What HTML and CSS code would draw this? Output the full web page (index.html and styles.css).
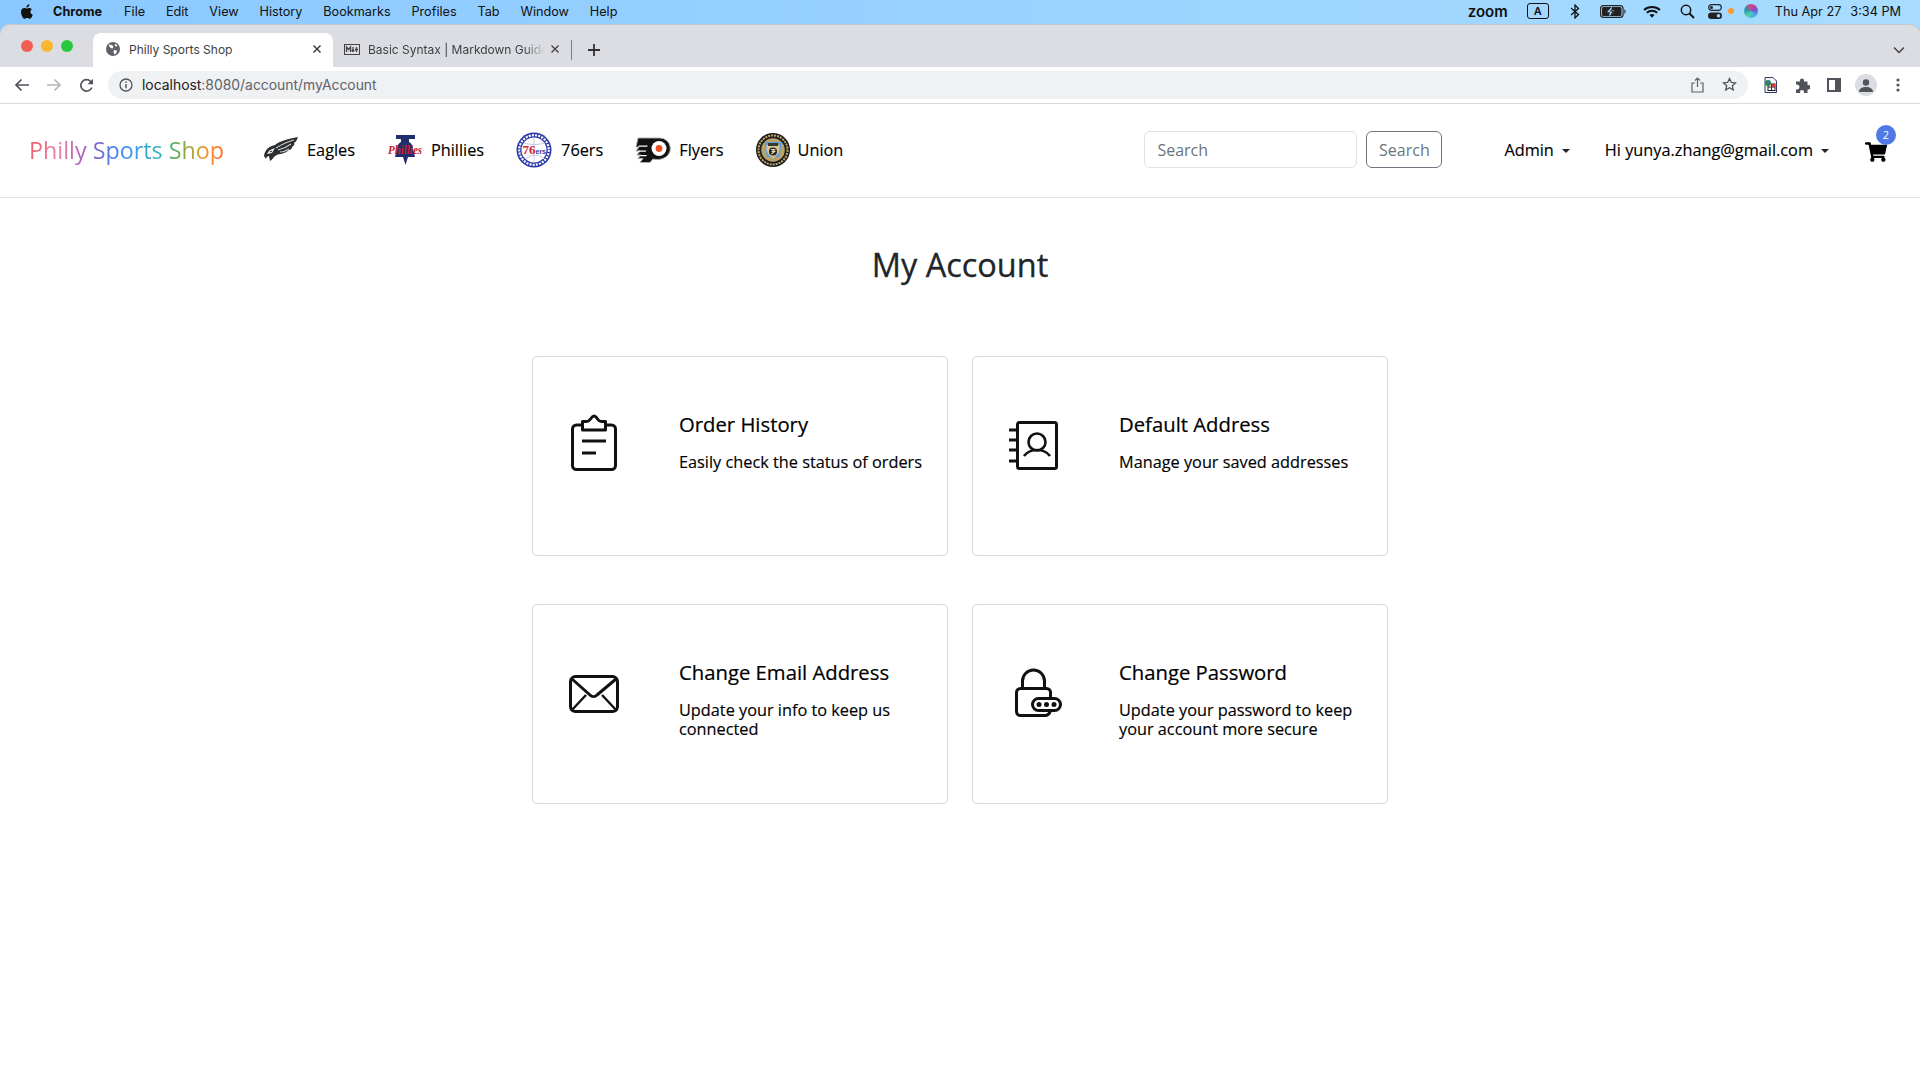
FILE: index.html
```html
<!DOCTYPE html>
<html lang="en">
<head>
    <meta charset="UTF-8">
    <meta name="viewport" content="width=device-width, initial-scale=1.0">
    <title>Philly Sports Shop</title>
    <link rel="stylesheet" href="styles.css">
</head>
<body>
    <div class="desktop">
        <div class="menubar">
            <svg class="apple" width="14" height="17" viewBox="0 0 14 17"><path fill="#111" d="M11.4 9c0-1.800 1.400-2.600 1.500-2.700-.8-1.200-2.100-1.400-2.500-1.400-1.100-.1-2.100.6-2.600.6-.6 0-1.400-.6-2.300-.6C4.300 4.900 3.200 5.600 2.600 6.600 1.300 8.800 2.300 12.100 3.500 13.900c.6.900 1.300 1.900 2.300 1.800.9 0 1.300-.6 2.400-.6s1.400.6 2.400.6 1.600-.9 2.200-1.800c.7-1 1-2 1-2.100-.1 0-2.400-.9-2.400-2.800zM9.600 3.600c.5-.6.800-1.500.7-2.300-.7 0-1.600.5-2.100 1.100-.5.5-.9 1.400-.8 2.200.8.100 1.700-.4 2.200-1z"/></svg>
            <span class="menu-app">Chrome</span>
            <span class="menu-item">File</span>
            <span class="menu-item">Edit</span>
            <span class="menu-item">View</span>
            <span class="menu-item">History</span>
            <span class="menu-item">Bookmarks</span>
            <span class="menu-item">Profiles</span>
            <span class="menu-item">Tab</span>
            <span class="menu-item">Window</span>
            <span class="menu-item">Help</span>

            <div class="tray">
                <span class="tray-zoom">zoom</span>
                <span class="tray-a">A</span>
                <svg class="tray-bt" width="10" height="15" viewBox="0 0 10 15"><path fill="none" stroke="#111" stroke-width="1.300" d="M1 4l7.500 6.500L5 14V1l3.500 3.500L1 11"/></svg>
                <svg class="tray-batt" width="26" height="13" viewBox="0 0 26 13"><rect x=".6" y=".6" width="22.500" height="11.800" rx="3" fill="none" stroke="#222" stroke-width="1.100"/><rect x="2" y="2" width="19.500" height="9" rx="1.500" fill="#222"/><rect x="24.200" y="4.500" width="1.300" height="4" rx=".6" fill="#444"/><path fill="#a5daff" d="M12 1.500L7 7.200h3l-1 4.300L14.500 5.500h-3z"/><path fill="#222" d="M12.500 3.200L9.500 6.500h2.500l-.8 3L14 6h-2.500z"/></svg>
                <svg class="tray-wifi" width="18" height="13" viewBox="0 0 18 13"><path fill="none" stroke="#111" stroke-width="2" d="M1 5c4.500-4 11.500-4 16 0M3.800 7.800c3-2.600 7.400-2.600 10.400 0"/><path fill="#111" d="M6.500 10c1.500-1.200 3.500-1.200 5 0L9 12.800z"/></svg>
                <svg class="tray-search" width="15" height="15" viewBox="0 0 15 15"><circle cx="6" cy="6" r="4.700" fill="none" stroke="#111" stroke-width="1.500"/><path stroke="#111" stroke-width="2" d="M9.500 9.500l4.500 4.500"/></svg>
                <svg class="tray-cc" width="14" height="15" viewBox="0 0 14 15"><rect x=".7" y=".7" width="12.600" height="5.600" rx="2.800" fill="none" stroke="#222" stroke-width="1.200"/><circle cx="3.500" cy="3.500" r="1.500" fill="#222"/><rect y="8.500" width="14" height="6.500" rx="3.200" fill="#222"/><circle cx="10.500" cy="11.700" r="1.800" fill="#9ed5ff"/></svg>
                <span class="tray-dot"></span>
                <span class="tray-siri"></span>
                <span class="tray-date">Thu Apr 27</span>
                <span class="tray-time">3:34 PM</span>
            </div>
        </div>

        <div class="tabstrip">
            <div class="lights">
                <span class="light light-red"></span>
                <span class="light light-yellow"></span>
                <span class="light light-green"></span>
            </div>
            <div class="tab tab-active">
                <svg width="14" height="14" viewBox="0 0 14 14"><circle cx="7" cy="7" r="7" fill="#5f6368"/><path fill="#fff" d="M3 2.500l3 .5 1.500 1.500-1 2-2-.5-1.500-2zM8 8l3 .5-.5 2.500-2 1.500-1-2.500zM9 1.800l2.300 1.500-.8 1.500-1.700-1z"/></svg>
                <span class="tab-title">Philly Sports Shop</span>
                <svg class="tab-close" width="10" height="10" viewBox="0 0 10 10"><path stroke="#333" stroke-width="1.400" d="M1.500 1.500l7 7M8.500 1.500l-7 7"/></svg>
            </div>
            <div class="tab tab-other">
                <svg width="16" height="11" viewBox="0 0 16 11"><rect x=".5" y=".5" width="15" height="10" fill="none" stroke="#444"/><path fill="none" stroke="#444" stroke-width="1.300" d="M2.500 8V3l2 2.500L6.500 3v5M9 3v4.500M9 7.500L7.800 6M9 7.500L10.200 6M11 5.500h3M12.500 3v5"/></svg>
                <span class="tab-title tab-fade">Basic Syntax | Markdown Guide</span>
                <svg class="tab-close" width="10" height="10" viewBox="0 0 10 10"><path stroke="#444" stroke-width="1.400" d="M1.500 1.500l7 7M8.500 1.500l-7 7"/></svg>
            </div>
            <span class="tab-sep"></span>
            <svg class="tab-new" width="14" height="14" viewBox="0 0 14 14"><path stroke="#333" stroke-width="1.800" d="M7 1v12M1 7h12"/></svg>
            <svg class="tab-list" width="14" height="8" viewBox="0 0 14 8"><path fill="none" stroke="#444" stroke-width="1.500" d="M2 1.500l5 5 5-5"/></svg>
        </div>
    </div>

    <div class="toolbar">
        <span class="tool"><svg width="16" height="14" viewBox="0 0 16 14"><path fill="none" stroke="#50545a" stroke-width="1.700" d="M15 7H2M7.500 1.500L2 7l5.500 5.500"/></svg></span>
        <span class="tool"><svg width="16" height="14" viewBox="0 0 16 14"><path fill="none" stroke="#b4b6ba" stroke-width="1.700" d="M1 7h13M8.500 1.500L14 7l-5.500 5.500"/></svg></span>
        <span class="tool"><svg width="15" height="15" viewBox="0 0 15 15"><path fill="none" stroke="#50545a" stroke-width="1.700" d="M12.800 9.500A5.700 5.700 0 1 1 11.500 3.300L13 4.800"/><path fill="#50545a" d="M14 .8v5.400H8.600z"/></svg></span>
        <div class="omnibox">
            <svg width="14" height="14" viewBox="0 0 14 14"><circle cx="7" cy="7" r="6" fill="none" stroke="#50545a" stroke-width="1.300"/><path stroke="#50545a" stroke-width="1.400" d="M7 6v4.200M7 3.600v1.500"/></svg>
            <span class="url"><b>localhost</b>:8080/account/myAccount</span>
            <svg class="omni-share" width="13" height="16" viewBox="0 0 13 16"><path fill="none" stroke="#5f6368" stroke-width="1.200" d="M4 6H1v9h11V6H9M6.500 10V1M4 3.500L6.500 1 9 3.500"/></svg>
            <svg class="omni-star" width="15" height="15" viewBox="0 0 15 15"><path fill="none" stroke="#50545a" stroke-width="1.300" d="M7.500 1.500l1.800 4 4.300.4-3.300 2.900 1 4.200-3.800-2.200-3.800 2.200 1-4.200L1.400 5.900l4.300-.4z"/></svg>
        </div>
        <span class="tool"><svg width="14" height="16" viewBox="0 0 14 16"><path fill="#f4f6fa" stroke="#333a66" d="M2 .5h8l3.500 3.500v11.500H2z"/><rect x="5" y="7" width="7" height="6.500" fill="#fff" stroke="#222"/><path stroke="#222" d="M8.500 7v6.500M5 10h7"/><rect x="8.500" y="7" width="3.500" height="3" fill="#d33"/><circle cx="5" cy="6" r="3" fill="#2a8a3c"/><circle cx="5" cy="5" r="1.500" fill="#2f6fd0"/></svg></span>
        <span class="tool"><svg width="15" height="15" viewBox="0 0 15 15"><path fill="#50545a" d="M5 2.500a2 2 0 0 1 4 0V3.500h3.500V7h1a2.200 2.200 0 0 1 0 4.400h-1V15H9v-1a2 2 0 0 0-4 0v1H1v-3.500h1a2.500 2.500 0 0 0 0-5H1V3.500h4z"/></svg></span>
        <span class="tool"><svg width="14" height="14" viewBox="0 0 14 14"><rect x="1" y="1" width="12" height="12" fill="#fff" stroke="#50545a" stroke-width="2"/><rect x="8" y="1" width="5" height="12" fill="#50545a"/></svg></span>
        <span class="tool"><span class="profile"><svg width="14" height="13" viewBox="0 0 14 13"><circle cx="7" cy="3.500" r="3.200" fill="#50545a"/><path fill="#50545a" d="M0 13c0-3.500 3-5 7-5s7 1.500 7 5z"/></svg></span></span>
        <span class="tool"><svg width="4" height="14" viewBox="0 0 4 14"><circle cx="2" cy="2" r="1.600" fill="#50545a"/><circle cx="2" cy="7" r="1.600" fill="#50545a"/><circle cx="2" cy="12" r="1.600" fill="#50545a"/></svg></span>
    </div>

    <nav class="navbar">
        <a class="brand">Philly Sports Shop</a>
        <div class="teams">
            <a class="team">
                <svg class="logo-eagles" width="35" height="25" viewBox="0 0 35 25">
                    <path fill="#2a2e31" d="M0 19C1 12 6 9 11 8c5-4 13-6 23-8-1 3-2 5-4 6 1 1 0 3-2 4 0 1-1 3-3 3-2 2-5 3-8 4-3 0-5 1-7 3-1 1-2 3-4 4l-1-5c-1 0-3 1-3 3z"/>
                    <path fill="none" stroke="#c9cdd0" stroke-width="1.200" d="M12 11c5-3 10-6 18-8M14 13c5-1 9-3 13-6M16 15c3 0 6-1 9-3"/>
                    <path fill="#e8eaeb" d="M3 17c1-3 4-5 8-6l-3 5z"/>
                    <circle cx="7" cy="14.500" r=".8" fill="#111"/>
                </svg>
                Eagles
            </a>
            <a class="team">
                <svg width="36" height="32" viewBox="0 0 36 32">
                    <path fill="#1f2f6e" d="M9 1h19v4h-6v3c2 1 4 3 4 7l2 8H8l2-8c0-4 2-6 4-7V5H9zM16 23h5l-2.500 8z"/>
                    <text class="logo-script" x="18" y="20" text-anchor="middle" textLength="34" lengthAdjust="spacingAndGlyphs">Phillies</text>
                </svg>
                Phillies
            </a>
            <a class="team">
                <svg width="37" height="36" viewBox="0 0 37 36">
                    <circle cx="18" cy="18" r="17.500" fill="#2a3aa8"/>
                    <circle cx="18" cy="18" r="14.800" fill="none" stroke="#fff" stroke-width="2.200" stroke-dasharray="2 1.200"/>
                    <circle cx="18" cy="18" r="12.500" fill="#fff"/>
                    <path fill="none" stroke="#c5cbe6" stroke-width="1" d="M8 11c6 2 14 2 21 0M18 6v24M10 27c5-5 14-5 18 0"/>
                    <text class="logo-76" x="6.500" y="22">76</text>
                    <text class="logo-ers" x="19.500" y="22">ers</text>
                </svg>
                76ers
            </a>
            <a class="team">
                <svg width="36" height="26" viewBox="0 0 36 26">
                    <path fill="#111" stroke="#a9abad" stroke-width="1" d="M3 1h22a10.500 10.500 0 0 1 3 20.500c-4 1.500-8 1-10 .5l-3 3.500H5l3-4H3l3-3.500H2l3-4H1l3-4H1z"/>
                    <circle cx="24" cy="11.500" r="7.500" fill="#fff"/>
                    <circle cx="24" cy="11.500" r="3.400" fill="#f04e23"/>
                    <path fill="#fff" d="M4 8.500h9l-1 1.200H3zM3.500 13.500h8l-1 1.200h-8zM6 18h6l-1 1.200H5z"/>
                </svg>
                Flyers
            </a>
            <a class="team">
                <svg width="34" height="34" viewBox="0 0 34 34">
                    <circle cx="17" cy="17" r="17" fill="#1b1c1a"/>
                    <circle cx="17" cy="17" r="14.500" fill="none" stroke="#c2a76c" stroke-width="2" stroke-dasharray="2 1"/>
                    <circle cx="17" cy="17" r="11.800" fill="#b9a26b"/>
                    <path fill="#5aa0d8" d="M9 9h16v5l-2 10H11L9 14z"/>
                    <path fill="#d8c795" d="M10.500 12h13v3c0 5-3 8-6.500 10-3.500-2-6.500-5-6.500-10z"/>
                    <circle cx="17" cy="18.500" r="4" fill="#23221e"/>
                    <path fill="none" stroke="#e4d7ae" stroke-width="1.200" d="M15 16.500h3.500l-2 2h2l-3 2.500"/>
                    <rect x="12" y="10" width="10" height="3" fill="#3a372c"/>
                </svg>
                Union
            </a>
        </div>

        <form class="search">
            <input class="search-input" type="text" placeholder="Search">
            <button class="search-btn" type="button">Search</button>
        </form>

        <a class="dropdown dropdown-admin">Admin</a>
        <a class="dropdown dropdown-user">Hi yunya.zhang@gmail.com</a>

        <a class="cart">
            <svg width="22" height="20" viewBox="0 0 576 512"><path fill="#000" d="M528.120 301.319l47.273-208C578.806 78.301 567.391 64 551.990 64H159.208l-9.166-44.810C147.758 8.021 137.930 0 126.529 0H24C10.745 0 0 10.745 0 24v16c0 13.255 10.745 24 24 24h69.883l70.248 343.435C147.325 417.100 136 435.222 136 456c0 30.928 25.072 56 56 56s56-25.072 56-56c0-15.674-6.447-29.835-16.824-40h209.647C430.447 426.165 424 440.326 424 456c0 30.928 25.072 56 56 56s56-25.072 56-56c0-22.172-12.888-41.332-31.579-50.405l5.517-24.276c3.413-15.018-8.002-29.319-23.403-29.319H218.117l-6.545-32h293.145c11.206 0 20.920-7.754 23.403-18.681z"/></svg>
            <span class="cart-badge">2</span>
        </a>
    </nav>

    <main class="account">
        <h1>My Account</h1>
        <div class="cards">
            <a class="card">
                <div class="card-icon">
                    <svg class="icon-order" width="52" height="62" viewBox="0 0 52 62" fill="none" stroke="#111" stroke-width="3" stroke-linejoin="round">
                        <path d="M14 13H8.500a4 4 0 0 0-4 4v36.500a4 4 0 0 0 4 4h35a4 4 0 0 0 4-4V17a4 4 0 0 0-4-4H38"/>
                        <path d="M14.500 18h23V9.500h-4c-2 0-3-1-4-2.500s-2-3-3.500-3-2.500 1.500-3.500 3-2 2.500-4 2.500h-4z"/>
                        <path d="M14 29h24M14 41h14"/>
                    </svg>
                </div>
                <div class="card-text">
                    <h2>Order History</h2>
                    <p>Easily check the status of orders</p>
                </div>
            </a>
            <a class="card">
                <div class="card-icon">
                    <svg class="icon-address" width="60" height="56" viewBox="-2 0 60 56" fill="none" stroke="#111" stroke-width="3" stroke-linejoin="round">
                        <rect x="11.500" y="4.500" width="39" height="46" rx="2"/>
                        <path d="M3 12h8M3 22h8M3 32h8M3 43h8"/>
                        <circle cx="31" cy="24" r="8.500" stroke-width="2.600"/>
                        <path stroke-width="2.600" d="M18 38c3-4 7-6 13-6s10 2 13 6"/>
                    </svg>
                </div>
                <div class="card-text">
                    <h2>Default Address</h2>
                    <p>Manage your saved addresses</p>
                </div>
            </a>
            <a class="card">
                <div class="card-icon">
                    <svg class="icon-email" width="56" height="44" viewBox="0 0 56 44" fill="none" stroke="#111" stroke-width="3" stroke-linejoin="round">
                        <rect x="4.500" y="4.500" width="47" height="35" rx="5"/>
                        <path d="M6 7l18 16c2 2 5 2 7 0L50 7"/>
                        <path stroke-width="2.400" d="M5 39l15-16M51 39L36 23"/>
                    </svg>
                </div>
                <div class="card-text">
                    <h2>Change Email Address</h2>
                    <p>Update your info to keep us connected</p>
                </div>
            </a>
            <a class="card">
                <div class="card-icon">
                    <svg class="icon-password" width="64" height="54" viewBox="-10 0 64 54" fill="none" stroke="#111" stroke-width="3" stroke-linejoin="round">
                        <path d="M10.500 22v-7a11 11 0 0 1 22 0v7"/>
                        <path d="M38.500 31v-4.500a4 4 0 0 0-4-4h-26a4 4 0 0 0-4 4v19a4 4 0 0 0 4 4H33c2.500 0 4.500-1.500 5.500-5"/>
                        <rect x="20.500" y="32.500" width="28" height="12" rx="6"/>
                        <g fill="#111" stroke="none"><circle cx="27" cy="38.500" r="2.500"/><circle cx="34.500" cy="38.500" r="2.500"/><circle cx="42" cy="38.500" r="2.500"/></g>
                    </svg>
                </div>
                <div class="card-text">
                    <h2>Change Password</h2>
                    <p>Update your password to keep your account more secure</p>
                </div>
            </a>
        </div>
    </main>
</body>
</html>
```

FILE: styles.css
```css
* {
    box-sizing: border-box;
}

body {
    margin: 0;
    background: white;
    color: #000;
    font-family: "Open Sans", sans-serif;
    font-size: 16px;
    height: 1080px;
    overflow: hidden;
}

/* mac menu bar and chrome window top */
.desktop {
    background: linear-gradient(to right, #8ac8ff, #a8dcff);
    font-family: Inter, "Liberation Sans", sans-serif;
}

.menubar {
    height: 24px;
    display: flex;
    align-items: center;
    padding-left: 19px;
    padding-bottom: 2px;
    font-size: 12.700px;
    color: #111;
}

.apple {
    margin-right: 20px;
}

.menu-app {
    font-weight: 700;
    margin-right: 22px;
}

.menu-item {
    margin-right: 20.800px;
}

.tray {
    margin-left: auto;
    padding-right: 19px;
    display: flex;
    align-items: center;
}

.tray-zoom {
    font-weight: 600;
    font-size: 15px;
    margin-right: 19px;
}

.tray-a {
    width: 22px;
    height: 16px;
    border: 1.3px solid #111;
    border-radius: 3px;
    font-size: 11px;
    font-weight: 600;
    line-height: 14px;
    text-align: center;
    margin-right: 21px;
}

.tray-bt {
    margin-right: 20px;
}

.tray-batt {
    margin-right: 17px;
}

.tray-wifi {
    margin-right: 19px;
}

.tray-search {
    margin-right: 13px;
}

.tray-cc {
    margin-right: 6px;
}

.tray-dot {
    width: 6px;
    height: 6px;
    border-radius: 50%;
    background: #ff9a2e;
    margin-right: 10px;
}

.tray-siri {
    width: 14px;
    height: 14px;
    border-radius: 50%;
    background: conic-gradient(#e0407e, #7a4fd0, #3fb4e8, #4fd0a0, #2a8fb0, #e0407e);
    margin-right: 17px;
}

.tray-date {
    margin-right: 9px;
}

.tabstrip {
    height: 43px;
    background: #dcdde2;
    border-radius: 10px 10px 0 0;
    box-shadow: inset 0 1px 0 #c4c6cc;
    display: flex;
    align-items: flex-end;
    padding-right: 14px;
    font-size: 12px;
    color: #3c4043;
}

.lights {
    width: 93px;
    height: 43px;
    padding: 16px 0 0 21px;
    display: flex;
    gap: 8px;
}

.light {
    width: 12px;
    height: 12px;
    border-radius: 50%;
}

.light-red {
    background: #f25d55;
}

.light-yellow {
    background: #fbb62f;
}

.light-green {
    background: #28c840;
}

.tab {
    height: 34px;
    display: flex;
    align-items: center;
    padding-bottom: 2px;
}

.tab-active {
    width: 240px;
    background: white;
    border-radius: 8px 8px 0 0;
    padding-left: 13px;
    padding-right: 11px;
}

.tab-active .tab-title {
    margin-left: 9px;
}

.tab-close {
    margin-left: auto;
}

.tab-other {
    width: 237px;
    margin-left: 1px;
    padding-left: 10px;
    padding-right: 11px;
}

.tab-other .tab-title {
    margin-left: 8px;
}

.tab-fade {
    width: 177px;
    white-space: nowrap;
    overflow: hidden;
    -webkit-mask-image: linear-gradient(to right, black 88%, transparent);
    mask-image: linear-gradient(to right, black 88%, transparent);
}

.tab-sep {
    width: 1px;
    height: 20px;
    background: #7d7f84;
    margin: 0 0 7px 0;
}

.tab-new {
    margin: 0 0 10px 15px;
}

.tab-list {
    margin: 0 0 13px auto;
}

.toolbar {
    height: 37px;
    background: white;
    border-bottom: 1px solid #d9dadd;
    display: flex;
    align-items: center;
    padding: 0 6px;
    font-family: Inter, "Liberation Sans", sans-serif;
}

.tool {
    width: 32px;
    display: flex;
    justify-content: center;
    align-items: center;
}

.omnibox {
    flex: 1;
    height: 28px;
    margin: 0 6px;
    background: #f0f1f3;
    border-radius: 14px;
    display: flex;
    align-items: center;
    padding-left: 11px;
    padding-right: 11px;
    padding-bottom: 1px;
    font-size: 13.900px;
    color: #5f6368;
}

.url {
    margin-left: 9px;
}

.url b {
    font-weight: 400;
    color: #202124;
}

.omni-share {
    margin-left: auto;
    margin-right: 18px;
}

.omni-star {
    margin-right: 0;
}

.profile {
    width: 22px;
    height: 22px;
    border-radius: 50%;
    background: #dcdde2;
    display: flex;
    align-items: center;
    justify-content: center;
}

/* shop navbar */
.navbar {
    height: 94px;
    border-bottom: 1px solid #dee2e6;
    display: flex;
    align-items: center;
    padding: 0 33px 2px 29px;
    font-size: 16.300px;
    -webkit-text-stroke: 0.15px #000;
}

.brand {
    font-size: 23.300px;
    margin-right: 40px;
    background: linear-gradient(to right, #f2606a, #e97fa8 16%, #9a5cc0 30%, #4c7fe6 42%, #3b9aee 54%, #2fb6b0 68%, #6aa84f 76%, #c4a72a 86%, #ff8a30 93%, #ff6a2b);
    -webkit-background-clip: text;
    background-clip: text;
    color: transparent;
    -webkit-text-stroke: 0;
}

.teams {
    display: flex;
    align-items: center;
    gap: 32px;
}

.team {
    display: flex;
    align-items: center;
    gap: 8px;
}

.team svg {
    overflow: visible;
}

.team svg text {
    -webkit-text-stroke: 0;
}

.logo-script {
    font-family: "Liberation Serif", serif;
    font-style: italic;
    font-weight: 700;
    font-size: 12px;
    fill: #c8202f;
}

.logo-76 {
    font-family: "Liberation Serif", serif;
    font-weight: 700;
    font-size: 13px;
    fill: #d3202f;
}

.logo-ers {
    font-family: "Liberation Sans", sans-serif;
    font-weight: 700;
    font-size: 7px;
    fill: #2a3aa8;
}

.search {
    margin-left: auto;
    display: flex;
    gap: 9px;
    -webkit-text-stroke: 0;
}

.search-input {
    width: 213px;
    height: 37px;
    padding: 6px 12px;
    border: 1px solid #dee2e6;
    border-radius: 6px;
    font-family: inherit;
    font-size: 16px;
    outline: none;
}

.search-input::placeholder {
    color: #6c757d;
}

.search-btn {
    width: 76px;
    height: 37px;
    padding: 0;
    background: white;
    border: 1px solid #6c757d;
    border-radius: 6px;
    font-family: inherit;
    font-size: 16px;
    color: #6c757d;
}

.dropdown::after {
    content: "";
    display: inline-block;
    margin-left: 8px;
    vertical-align: 3px;
    border-top: 4.800px solid #212529;
    border-left: 4.800px solid transparent;
    border-right: 4.800px solid transparent;
}

.dropdown-admin {
    margin-left: 62px;
}

.dropdown-user {
    margin-left: 35px;
}

.cart {
    position: relative;
    margin-left: 36px;
    margin-top: 4px;
    display: flex;
}

.cart-badge {
    position: absolute;
    top: -17px;
    right: -9px;
    width: 20px;
    height: 20px;
    border-radius: 50%;
    background: #4e79e6;
    color: white;
    font-size: 11px;
    line-height: 20px;
    text-align: center;
    -webkit-text-stroke: 0;
}

/* account page */
.account {
    padding-top: 48px;
}

h1 {
    margin: 0 0 72px 0;
    font-size: 32.500px;
    font-weight: 400;
    line-height: 38px;
    text-align: center;
    color: #212529;
    -webkit-text-stroke: 0.3px #212529;
}

.cards {
    width: 856px;
    margin: 0 auto;
    display: grid;
    grid-template-columns: 1fr 1fr;
    grid-auto-rows: 200px;
    column-gap: 24px;
    row-gap: 48px;
}

.card {
    display: flex;
    border: 1px solid #d9d9d9;
    border-radius: 5px;
}

.card-icon {
    width: 122px;
    margin-right: 24px;
    flex-shrink: 0;
    display: flex;
    justify-content: center;
    align-items: flex-start;
}

.icon-order {
    margin-top: 55px;
}

.icon-address {
    margin-top: 61px;
}

.icon-email {
    margin-top: 67px;
}

.icon-password {
    margin-top: 61px;
}

.card-text {
    padding: 55px 20px 0 0;
}

h2 {
    margin: 0 0 17px 0;
    font-size: 20.300px;
    font-weight: 400;
    line-height: 24px;
    -webkit-text-stroke: 0.2px #000;
}

p {
    margin: 0;
    font-size: 16.300px;
    line-height: 19px;
    -webkit-text-stroke: 0.15px #000;
}
```
